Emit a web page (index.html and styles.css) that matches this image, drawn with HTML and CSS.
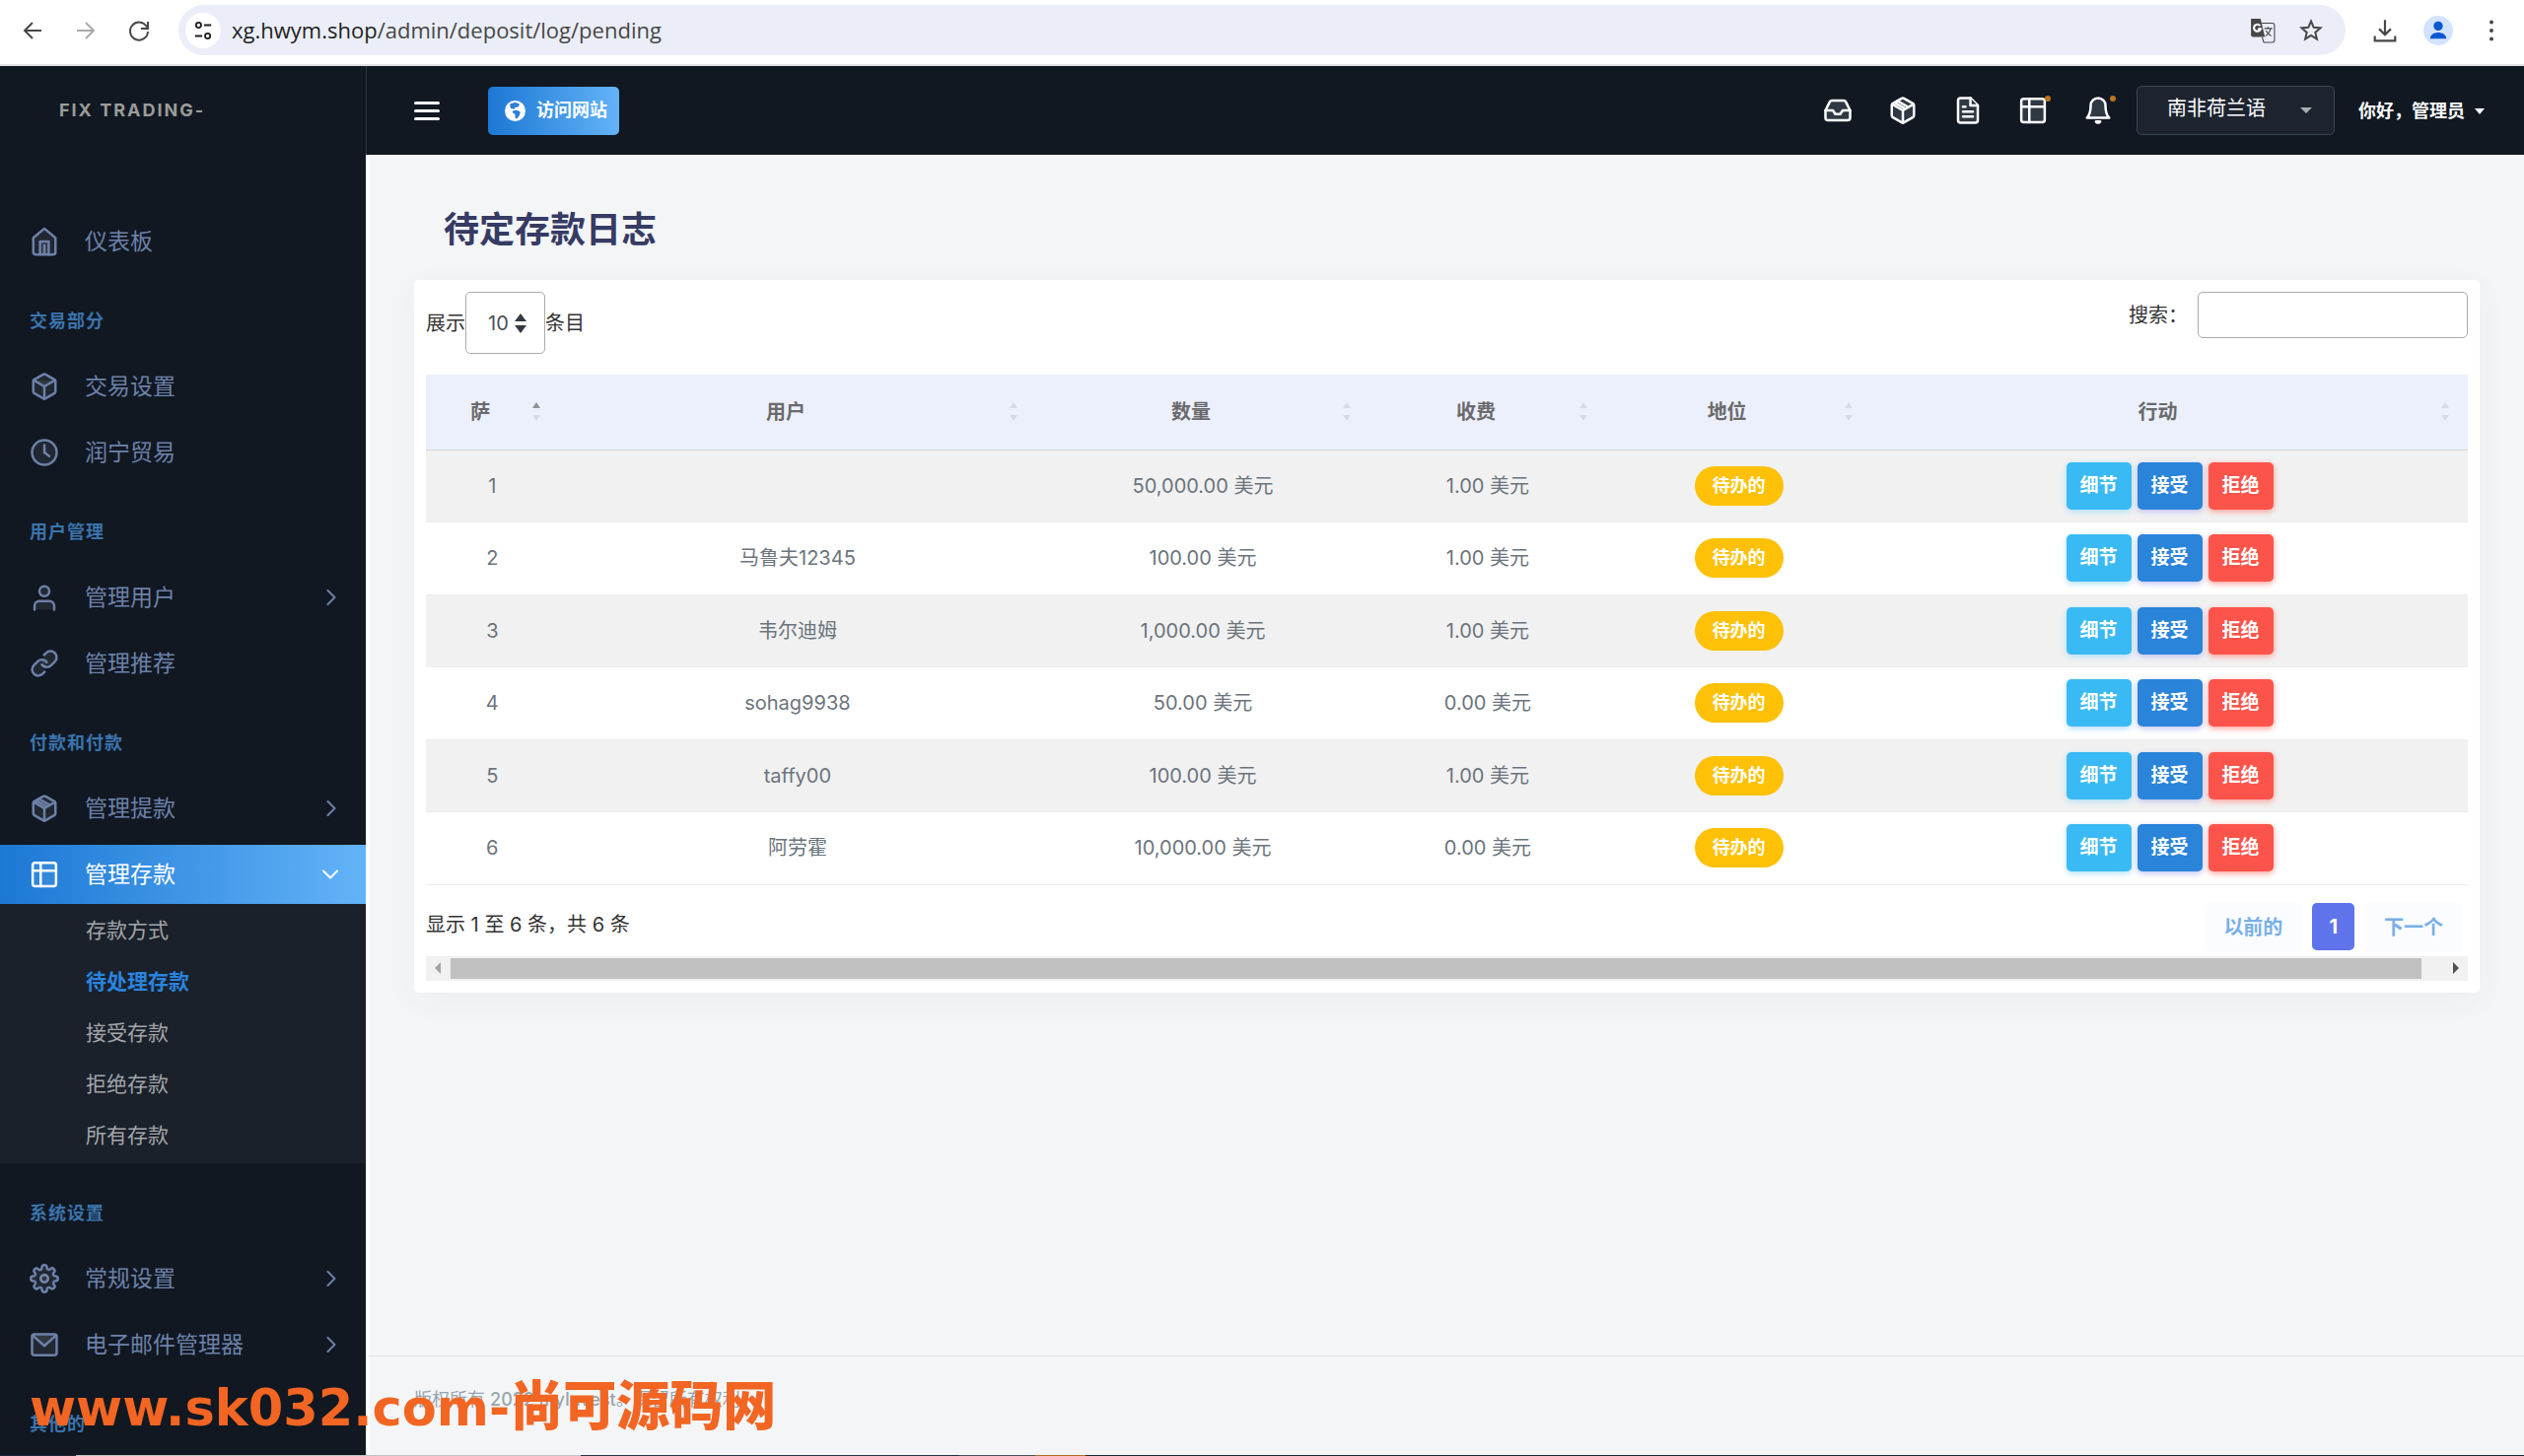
FILE: index.html
```html
<!DOCTYPE html>
<html lang="zh-CN">
<head>
<meta charset="utf-8">
<meta name="viewport" content="width=device-width, initial-scale=1">
<title>待定存款日志</title>
<link rel="stylesheet" href="styles.css">
</head>
<body>
<svg class="sprite" aria-hidden="true">
  <symbol id="i-home" viewBox="0 0 24 24"><path d="M3 9l9-7.500 9 7.500v11.500a2 2 0 0 1-2 2H5a2 2 0 0 1-2-2z"/><path d="M8.500 22.500V12h7v10.500M12 15v7"/></symbol>
  <symbol id="i-box" viewBox="0 0 24 24"><path d="M21 16V8a2 2 0 0 0-1-1.730l-7-4a2 2 0 0 0-2 0l-7 4A2 2 0 0 0 3 8v8a2 2 0 0 0 1 1.730l7 4a2 2 0 0 0 2 0l7-4A2 2 0 0 0 21 16z"/><path d="M3.270 6.960L12 12.010l8.730-5.050M12 22.080V12"/></symbol>
  <symbol id="i-package" viewBox="0 0 24 24"><path d="M21 16V8a2 2 0 0 0-1-1.730l-7-4a2 2 0 0 0-2 0l-7 4A2 2 0 0 0 3 8v8a2 2 0 0 0 1 1.730l7 4a2 2 0 0 0 2 0l7-4A2 2 0 0 0 21 16z"/><path d="M3.270 6.960L12 12.010l8.730-5.050M12 22.080V12M16.500 9.400L7.500 4.210M13 10L5.500 5.700"/></symbol>
  <symbol id="i-clock" viewBox="0 0 24 24"><circle cx="12" cy="12" r="10"/><path d="M12 6v6l4 3"/></symbol>
  <symbol id="i-user" viewBox="0 0 24 24"><circle cx="12" cy="7" r="4"/><path d="M20 22v-3a4 4 0 0 0-4-4H8a4 4 0 0 0-4 4v3"/></symbol>
  <symbol id="i-link" viewBox="0 0 24 24"><path d="M10 13a5 5 0 0 0 7.540.540l3-3a5 5 0 0 0-7.070-7.070l-1.720 1.710"/><path d="M14 11a5 5 0 0 0-7.540-.540l-3 3a5 5 0 0 0 7.070 7.070l1.710-1.710"/></symbol>
  <symbol id="i-layout" viewBox="0 0 24 24"><rect x="2.500" y="2.500" width="19" height="19" rx="2"/><path d="M2.500 9h19M9 2.500v19"/></symbol>
  <symbol id="i-settings" viewBox="0 0 24 24"><circle cx="12" cy="12" r="3"/><path d="M19.400 15a1.650 1.650 0 0 0 .330 1.820l.060.060a2 2 0 0 1-2.830 2.830l-.060-.060a1.650 1.650 0 0 0-2.820 1.180V21a2 2 0 0 1-4 0v-.090A1.650 1.650 0 0 0 7.180 19.730l-.060.060a2 2 0 0 1-2.830-2.830l.060-.060A1.650 1.650 0 0 0 3.090 14H3a2 2 0 0 1 0-4h.090A1.650 1.650 0 0 0 4.270 7.180l-.060-.060a2 2 0 0 1 2.830-2.830l.060.060A1.650 1.650 0 0 0 10 3.090V3a2 2 0 0 1 4 0v.090a1.650 1.650 0 0 0 2.820 1.180l.060-.060a2 2 0 0 1 2.830 2.830l-.060.060A1.650 1.650 0 0 0 20.910 10H21a2 2 0 0 1 0 4h-.090a1.650 1.650 0 0 0-1.510 1z"/></symbol>
  <symbol id="i-mail" viewBox="0 0 24 24"><rect x="2" y="3.500" width="20" height="17" rx="2"/><path d="M2.500 4.500L12 13l9.500-8.500"/></symbol>
  <symbol id="i-inbox" viewBox="0 0 24 24"><path d="M5.450 5.110L2 12v6a2 2 0 0 0 2 2h16a2 2 0 0 0 2-2v-6l-3.450-6.890A2 2 0 0 0 16.760 4H7.240a2 2 0 0 0-1.790 1.110z"/><path d="M22 12h-6l-2 3h-4l-2-3H2"/></symbol>
  <symbol id="i-file" viewBox="0 0 24 24"><path d="M14 2H6a2 2 0 0 0-2 2v16a2 2 0 0 0 2 2h12a2 2 0 0 0 2-2V8z"/><path d="M14 2v6h6M16 13H8M16 17H8M10 9H8"/></symbol>
  <symbol id="i-bell" viewBox="0 0 24 24"><path d="M18 8A6 6 0 0 0 6 8c0 7-3 10-3 10h18s-3-3-3-10"/><path d="M13.730 21a2 2 0 0 1-3.460 0z"/></symbol>
  <symbol id="i-chev" viewBox="0 0 10 16"><path d="M1.500 1L8.500 8l-7 7"/></symbol>
  <symbol id="i-down" viewBox="0 0 16 10"><path d="M1 1.500L8 8.500l7-7"/></symbol>
</svg>

<header class="browser">
  <nav class="browser-nav">
    <button class="tool" aria-label="Back"><svg viewBox="0 0 24 24"><path d="M21 12H4M12 4l-8 8 8 8"/></svg></button>
    <button class="tool tool-off" aria-label="Forward"><svg viewBox="0 0 24 24"><path d="M3 12h17M12 4l8 8-8 8"/></svg></button>
    <button class="tool" aria-label="Reload"><svg viewBox="0 0 24 24"><path d="M20 8.500A9 9 0 1 0 21 13M21 3v7h-7"/></svg></button>
  </nav>
  <div class="address">
    <span class="site-info"><svg viewBox="0 0 24 24"><circle cx="7" cy="6" r="2.800"/><path d="M13 6h8M3 18h8"/><circle cx="17" cy="18" r="2.800"/></svg></span>
    <span class="url"><b>xg.hwym.shop</b>/admin/deposit/log/pending</span>
    <button class="tool" aria-label="Translate"><svg class="translate" viewBox="0 0 24 24"><path class="solid" d="M1 1h9l4 17H3a2 2 0 0 1-2-2z"/><path class="thin" d="M11 5h10a2 2 0 0 1 2 2v14a2 2 0 0 1-2 2H13l-1.500-4.500M13.500 10h7.500M17 8.500V10M19.500 10c-.8 3-2.500 5.500-5 7M15 12c1 2 3 4 5 5"/><path class="knock" d="M9.500 7.500a3.200 3.200 0 1 0 .5 3H7.500"/></svg></button>
    <button class="tool" aria-label="Bookmark"><svg viewBox="0 0 24 24"><path d="M12 2.500l2.700 6.300 6.800.600-5.200 4.500 1.600 6.700L12 17l-5.900 3.600 1.600-6.700L2.500 9.400l6.800-.600z"/></svg></button>
  </div>
  <div class="browser-end">
    <button class="tool" aria-label="Downloads"><svg class="translate" viewBox="0 0 24 24"><path d="M12 2v14M6.500 10.500L12 16l5.500-5.500M2.500 17v4.500h19V17"/></svg></button>
    <button class="profile" aria-label="Profile"><svg viewBox="0 0 24 24"><circle cx="12" cy="8" r="4"/><path d="M5 19c0-7 14-7 14 0z"/></svg></button>
    <button class="tool" aria-label="Menu"><svg viewBox="0 0 24 24"><g class="dots"><circle cx="12" cy="3.500" r="2"/><circle cx="12" cy="12" r="2"/><circle cx="12" cy="20.500" r="2"/></g></svg></button>
  </div>
</header>

<div class="app">
  <aside class="sidebar">
    <a class="brand" href="#">FIX TRADING-</a>
    <nav class="menu">
      <a class="item" href="#"><svg><use href="#i-home"/></svg>仪表板</a>
      <h2 class="group">交易部分</h2>
      <a class="item" href="#"><svg><use href="#i-box"/></svg>交易设置</a>
      <a class="item" href="#"><svg><use href="#i-clock"/></svg>润宁贸易</a>
      <h2 class="group">用户管理</h2>
      <a class="item" href="#"><svg><use href="#i-user"/></svg>管理用户<svg class="chev"><use href="#i-chev"/></svg></a>
      <a class="item" href="#"><svg><use href="#i-link"/></svg>管理推荐</a>
      <h2 class="group">付款和付款</h2>
      <a class="item" href="#"><svg><use href="#i-package"/></svg>管理提款<svg class="chev"><use href="#i-chev"/></svg></a>
      <a class="item item-on" href="#"><svg><use href="#i-layout"/></svg>管理存款<svg class="chev chev-down"><use href="#i-down"/></svg></a>
      <div class="submenu">
        <a href="#">存款方式</a>
        <a class="on" href="#">待处理存款</a>
        <a href="#">接受存款</a>
        <a href="#">拒绝存款</a>
        <a href="#">所有存款</a>
      </div>
      <h2 class="group">系统设置</h2>
      <a class="item" href="#"><svg><use href="#i-settings"/></svg>常规设置<svg class="chev"><use href="#i-chev"/></svg></a>
      <a class="item" href="#"><svg><use href="#i-mail"/></svg>电子邮件管理器<svg class="chev"><use href="#i-chev"/></svg></a>
      <h2 class="group">其他的</h2>
    </nav>
  </aside>

  <div class="main">
    <header class="topbar">
      <button class="burger" aria-label="菜单"><span></span><span></span><span></span></button>
      <a class="visit" href="#"><svg viewBox="0 0 24 24"><circle cx="12" cy="12" r="12"/><path d="M6 4l6-2 5 2-1 3-4 1-1 2-4-1-1-3zM9 12l5-1 4 2-1 4-3 4-2-1v-4l-3-2z"/></svg>访问网站</a>
      <div class="shortcuts">
        <a href="#" aria-label="收件箱"><svg><use href="#i-inbox"/></svg></a>
        <a href="#" aria-label="提款"><svg><use href="#i-package"/></svg></a>
        <a href="#" aria-label="文件"><svg><use href="#i-file"/></svg></a>
        <a class="dot" href="#" aria-label="存款"><svg><use href="#i-layout"/></svg></a>
        <a class="dot" href="#" aria-label="通知"><svg><use href="#i-bell"/></svg></a>
      </div>
      <div class="lang"><select aria-label="语言"><option>南非荷兰语</option></select><i class="caret"></i></div>
      <button class="account">你好，管理员<i class="caret"></i></button>
    </header>

    <main class="content">
      <h1>待定存款日志</h1>
      <section class="card">
        <div class="controls">
          <div class="length"><label for="len">展示</label><span class="len-box"><select id="len"><option>10</option></select><svg viewBox="0 0 12 20"><path d="M0 8l6-8 6 8zM0 12l6 8 6-8z"/></svg></span><span>条目</span></div>
          <div class="search"><label for="q">搜索：</label><input id="q" type="search"></div>
        </div>
        <table>
          <colgroup><col class="c1"><col class="c2"><col class="c3"><col class="c4"><col class="c5"><col class="c6"></colgroup>
          <thead><tr><th class="asc">萨</th><th>用户</th><th>数量</th><th>收费</th><th>地位</th><th>行动</th></tr></thead>
          <tbody>
            <tr><td>1</td><td></td><td>50,000.00 美元</td><td>1.00 美元</td><td><span class="badge">待办的</span></td><td><div class="acts"><button class="info">细节</button><button class="ok">接受</button><button class="no">拒绝</button></div></td></tr>
            <tr><td>2</td><td>马鲁夫12345</td><td>100.00 美元</td><td>1.00 美元</td><td><span class="badge">待办的</span></td><td><div class="acts"><button class="info">细节</button><button class="ok">接受</button><button class="no">拒绝</button></div></td></tr>
            <tr><td>3</td><td>韦尔迪姆</td><td>1,000.00 美元</td><td>1.00 美元</td><td><span class="badge">待办的</span></td><td><div class="acts"><button class="info">细节</button><button class="ok">接受</button><button class="no">拒绝</button></div></td></tr>
            <tr><td>4</td><td>sohag9938</td><td>50.00 美元</td><td>0.00 美元</td><td><span class="badge">待办的</span></td><td><div class="acts"><button class="info">细节</button><button class="ok">接受</button><button class="no">拒绝</button></div></td></tr>
            <tr><td>5</td><td>taffy00</td><td>100.00 美元</td><td>1.00 美元</td><td><span class="badge">待办的</span></td><td><div class="acts"><button class="info">细节</button><button class="ok">接受</button><button class="no">拒绝</button></div></td></tr>
            <tr><td>6</td><td>阿劳霍</td><td>10,000.00 美元</td><td>0.00 美元</td><td><span class="badge">待办的</span></td><td><div class="acts"><button class="info">细节</button><button class="ok">接受</button><button class="no">拒绝</button></div></td></tr>
          </tbody>
        </table>
        <div class="table-foot">
          <p>显示 1 至 6 条，共 6 条</p>
          <nav class="pages"><button disabled>以前的</button><button class="current">1</button><button disabled>下一个</button></nav>
        </div>
        <div class="scroll"><i class="left"></i><span class="thumb"></span><i class="right"></i></div>
      </section>
    </main>
    <footer class="footer">版权所有 <b>2022 myInvest</b>。保留所有权利</footer>
  </div>
</div>
<div class="watermark">www.sk032.com-<span>尚可源码网</span></div>
<div class="taskbar"></div>
</body>
</html>
```
FILE: styles.css
```css
* { box-sizing: border-box; }
html, body { height: 100%; }
body {
  margin: 0;
  display: flex;
  flex-direction: column;
  position: relative;
  overflow: hidden;
  background: #f3f5f7;
  color: #333;
  font: 20px/30px Inter, "Noto Sans CJK SC", sans-serif;
}
a { color: inherit; text-decoration: none; }
button, select, input { font: inherit; color: inherit; margin: 0; padding: 0; border: 0; background: none; }
h1, h2, p { margin: 0; }
svg { fill: none; stroke: currentColor; stroke-width: 2; stroke-linecap: round; stroke-linejoin: round; flex: none; }
.sprite { position: absolute; width: 0; height: 0; }

/* browser toolbar */
.browser {
  flex: none;
  display: flex;
  align-items: center;
  height: 67px;
  padding: 0 18px 4px 18px;
  background: #fff;
  border-bottom: 2px solid #dfe3e2;
}
.browser-nav { display: flex; gap: 24px; margin-right: 25px; }
.tool { display: flex; align-items: center; justify-content: center; width: 30px; height: 30px; color: #474747; }
.tool svg { width: 24px; height: 24px; stroke-linecap: butt; stroke-linejoin: miter; }
.tool .translate { width: 26px; height: 26px; }
.tool-off { color: #a9a9a9; }
.solid { fill: #474747; stroke: none; }
.thin { stroke-width: 1; }
.knock { stroke: #fff; }
.dots { fill: currentColor; stroke: none; }
.address {
  flex: 1;
  display: flex;
  align-items: center;
  gap: 19px;
  height: 51px;
  padding: 0 20px 0 7px;
  border-radius: 26px;
  background: #ebeef8;
}
.site-info { display: flex; align-items: center; justify-content: center; width: 36px; height: 36px; border-radius: 50%; background: #fff; color: #1f1f1f; }
.site-info svg { width: 22px; height: 22px; stroke-linecap: butt; }
.url { flex: 1; margin-left: -8px; padding-bottom: 2px; font: 22px/30px "Open Sans", sans-serif; color: #474747; }
.url b { font-weight: 400; color: #1f1f1f; }
.browser-end { display: flex; align-items: center; gap: 24px; margin-left: 25px; }
.profile { width: 30px; height: 30px; border-radius: 50%; background: #d3e3fd; display: flex; align-items: center; justify-content: center; }
.profile svg { width: 28px; height: 28px; fill: #0b57d0; stroke: none; }

/* shell */
.app { flex: 1; min-height: 0; display: flex; }
.sidebar { flex: none; width: 371px; overflow: hidden; background: #111822; color: #6c81a8; }
.brand { display: block; height: 90px; padding: 30px 60px; font: 700 18px/30px Inter, sans-serif; letter-spacing: 2px; color: #9c9c98; }
.menu { padding-top: 58px; }
.item { display: flex; align-items: center; height: 60px; padding: 0 28px 0 30px; font-size: 23px; }
.item + .item { margin-top: 7px; }
.item svg { width: 30px; height: 30px; margin-right: 26px; }
.item use { fill: rgba(255, 255, 255, .07); }
.item .chev { width: 10px; height: 16px; margin: 0 2px 0 auto; }
.item .chev use { fill: none; }
.item .chev-down { width: 16px; height: 10px; margin-right: 0; }
.item-on { background: linear-gradient(90deg, #1c78d4, #63b3f7); color: #fff; }
.group { padding: 36px 30px 21px; font-size: 18px; line-height: 30px; font-weight: 700; letter-spacing: 1px; color: #3b74ad; }
.submenu { padding: 1px 0 2px; background: #1a212b; color: #a3a5a8; }
.submenu a { display: block; padding: 0 30px 0 87px; font-size: 21px; line-height: 52px; }
.submenu .on { color: #2a84de; font-weight: 700; }

.main { flex: 1; min-width: 0; display: flex; flex-direction: column; }
.topbar {
  flex: none;
  display: flex;
  align-items: center;
  height: 90px;
  padding: 0 40px 0 48px;
  background: #111822;
  border-left: 1px solid #2c3843;
  color: #fff;
}
.burger { display: flex; flex-direction: column; gap: 5px; width: 26px; margin-right: 49px; }
.burger span { height: 3px; border-radius: 2px; background: #fff; }
.visit { display: flex; align-items: center; gap: 11px; height: 49px; padding: 0 12px 0 17px; border-radius: 5px; background: linear-gradient(90deg, #1c78d4, #63b3f7); font-size: 18px; font-weight: 700; }
.visit svg { width: 21px; height: 21px; fill: #fff; stroke: none; }
.visit path { fill: #2d80d4; }
.shortcuts { flex: 1; display: flex; justify-content: flex-end; gap: 36px; margin-right: 24px; }
.shortcuts a { position: relative; display: flex; width: 30px; height: 30px; }
.shortcuts svg { width: 30px; height: 30px; }
.shortcuts use { fill: #303943; }
.dot::after { content: ""; position: absolute; top: 0; right: -3px; width: 6px; height: 6px; border-radius: 3px; background: #bd7420; }
.caret { flex: none; width: 0; height: 0; border: 5px solid transparent; border-top: 6px solid currentColor; border-bottom: 0; }
.lang { display: flex; align-items: center; width: 201px; height: 50px; margin-right: 24px; border: 1px solid #3a444f; border-radius: 5px; background: #1d242f; }
.lang select { flex: 1; height: 48px; margin-right: -34px; padding: 0 30px 4px; appearance: none; color: #fff; }
.lang .caret { margin-right: 22px; border-width: 6px 6px 0; color: #aaadb2; pointer-events: none; }
.account { display: flex; align-items: center; gap: 10px; padding-top: 2px; font-size: 18px; font-weight: 700; }

.content { flex: 1; padding: 51px 45px 0; border-left: 4px solid #fff; }
h1 { margin: 0 30px 26px; font-size: 36px; line-height: 50px; font-weight: 700; color: #363b64; }
.card { padding: 12px; border-radius: 5px; background: #fff; box-shadow: 0 8px 32px rgba(70, 80, 120, .04); }
.controls { display: flex; justify-content: space-between; align-items: flex-start; margin-bottom: 21px; }
.length { display: flex; align-items: center; }
.len-box { position: relative; }
.len-box select { display: block; width: 81px; height: 63px; padding-left: 22px; appearance: none; border: 1px solid #aaa; border-radius: 5px; color: #495057; }
.len-box svg { position: absolute; right: 19px; top: 22px; width: 12px; height: 20px; fill: #343a40; stroke: none; pointer-events: none; }
.search { display: flex; align-items: center; gap: 10px; }
.search input { width: 274px; height: 47px; padding: 0 10px; border: 1px solid #aaa; border-radius: 5px; background: #fff; }

table { width: 100%; table-layout: fixed; border-collapse: collapse; color: #6b747d; text-align: center; }
.c1 { width: 6.5%; } .c2 { width: 23.4%; } .c3 { width: 16.3%; } .c4 { width: 11.6%; } .c5 { width: 13%; } .c6 { width: 29.2%; }
th { position: relative; height: 76px; padding: 0 24px 0 0; background: #ecf0fd; border-bottom: 1px solid #d5d7dc; font-weight: 700; color: #6a6a6c; }
th::before, th::after { content: ""; position: absolute; right: 19px; border: 4px solid transparent; }
th::before { top: 28px; border-top: 0; border-bottom: 6px solid #d8dbe6; }
th::after { top: 41px; border-bottom: 0; border-top: 6px solid #d8dbe6; }
.asc::before { border-bottom-color: #8e9097; }
td { height: 73px; padding: 0; border-bottom: 1px solid #e9ebed; }
tr:nth-child(even) td { height: 74px; }
tbody tr:nth-child(odd) { background: #f1f1f1; }
.badge { display: inline-block; padding: 0 18px; border-radius: 20px; background: #fec107; color: #fff; font-size: 18px; font-weight: 700; line-height: 40px; vertical-align: middle; }
.acts { display: flex; justify-content: center; gap: 6px; }
.acts button { width: 66px; height: 48px; border-radius: 5px; color: #fff; font-size: 19px; font-weight: 700; }
.info { background: #3abaf4; box-shadow: 0 2px 6px #acdff5; }
.ok { background: #2a84da; box-shadow: 0 2px 6px #bdbff2; }
.no { background: #fc544b; box-shadow: 0 2px 6px #fd9b96; }

.table-foot { display: flex; justify-content: space-between; align-items: flex-start; padding: 18px 6px 4px 0; }
.table-foot p { line-height: 44px; color: #333; }
.pages { display: flex; gap: 11px; }
.pages button { height: 50px; padding: 0 19px; border-radius: 5px; background: #fafcff; color: #78b0e8; font-weight: 700; }
.pages .current { height: 48px; padding: 0 17px; background: #5f73ea; color: #fff; }
.scroll { display: flex; align-items: center; height: 25px; background: #f1f1f1; }
.scroll i { width: 0; height: 0; border: 6px solid transparent; }
.scroll .left { margin: 0 10px 0 3px; border-right-color: #a3a3a3; }
.scroll .thumb { flex: 1; height: 21px; background: #c1c1c1; }
.scroll .right { margin: 0 3px 0 32px; border-left-color: #505050; }

.footer { flex: none; height: 101px; padding: 29px 45px; border-left: 4px solid #fff; border-top: 1px solid #e3e6e9; color: #98a6ad; font-size: 18px; }
.footer b { font-weight: 500; }

/* overlay stamp */
.watermark { position: absolute; left: 30px; bottom: 15px; color: #f26522; font: 700 51px/66px "DejaVu Sans", sans-serif; white-space: nowrap; pointer-events: none; }
.watermark span { font-family: "Noto Sans CJK SC", sans-serif; font-size: 54px; font-weight: 900; }
.taskbar { flex: none; height: 1px; background: linear-gradient(90deg, #1c2738 0 3%, #bfc1c2 3% 23%, #263244 23% 38%, #4a5058 38% 41%, #b06a2c 41% 43%, #1d2735 43%); }
```
